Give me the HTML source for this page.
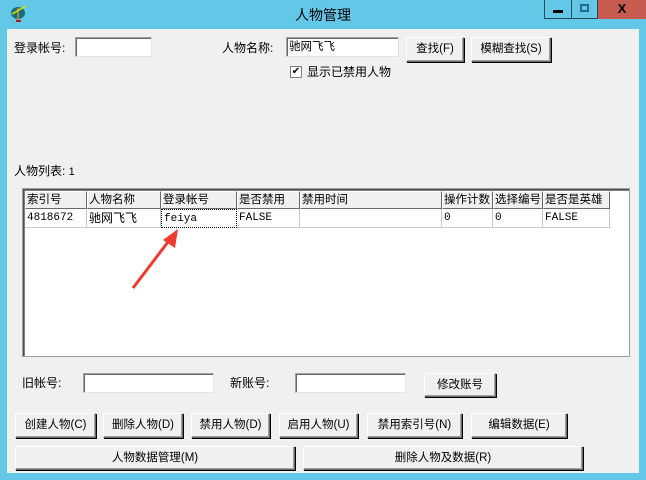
<!DOCTYPE html>
<html><head><meta charset="utf-8"><style>
*{box-sizing:border-box;margin:0;padding:0}
body{width:646px;height:480px;background:#63c8e8;position:relative;overflow:hidden;font-family:"Liberation Sans","Noto Sans CJK SC","WenQuanYi Zen Hei",sans-serif;font-size:12px;color:#000}
.a{position:absolute}
.client{left:7px;top:29px;width:632px;height:444px;background:#f0f0f0}
.inp{position:absolute;background:#fff;border:1px solid #a0a0a0;border-right-color:#e3e3e3;border-bottom-color:#e3e3e3;box-shadow:inset 1px 1px 0 #696969;font-size:11.5px;line-height:18px;padding-left:2px}
.btn{position:absolute;background:#f0f0f0;border:1px solid #fff;border-right-color:#696969;border-bottom-color:#696969;box-shadow:1px 1px 0 #000 , inset -1px -1px 0 #a0a0a0;text-align:center;font-size:11.5px}
.lbl{position:absolute;font-size:12px;line-height:14px;white-space:nowrap}
.list{left:22px;top:188px;width:608px;height:169px;background:#fff;border:1px solid #a0a0a0;box-shadow:inset 1px 1px 0 #505050,inset 2px 2px 0 #808080}
.hd{position:absolute;top:191px;height:18px;background:#f0f0f0;border-right:1px solid #696969;border-bottom:1px solid #696969;border-left:1px solid #fff;border-top:1px solid #fff;padding-left:1px;line-height:16px;white-space:nowrap;overflow:hidden;font-size:11.5px}
.cell{position:absolute;top:209px;height:19px;border-right:1px solid #c8c8c8;border-bottom:1px solid #c8c8c8;padding-left:2px;line-height:18px;font-family:"Liberation Mono","Noto Sans CJK SC",monospace;font-size:11px;white-space:nowrap}
</style></head><body>
<svg class="a" style="left:8px;top:4px" width="20" height="18" viewBox="0 0 20 18"><ellipse cx="10" cy="9" rx="7" ry="6" fill="#16707a"/><rect x="9" y="4" width="2" height="13" fill="#b08040"/><path d="M4 10 L18 2" stroke="#e0e000" stroke-width="1.5"/><rect x="8" y="16" width="5" height="2" fill="#a02020"/></svg>
<div class="a" style="left:0;top:5px;width:646px;text-align:center;font-size:14px">人物管理</div>
<div class="a" style="left:544px;top:0;width:28px;height:19px;border:1px solid #2a4a5a;border-top:none"></div>
<div class="a" style="left:553px;top:10px;width:10px;height:3px;background:#000"></div>
<div class="a" style="left:572px;top:0;width:26px;height:19px;border:1px solid #2a4a5a;border-top:none;border-left:none"></div>
<div class="a" style="left:580px;top:4px;width:9px;height:8px;border:2px solid #1e6a8a"></div>
<div class="a" style="left:598px;top:0;width:48px;height:19px;background:#c75b50;text-align:center;font-weight:bold;font-size:13px;line-height:18px">X</div>
<div class="a client"></div>
<div class="lbl" style="left:14px;top:41px">登录帐号:</div>
<div class="inp" style="left:75px;top:37px;width:77px;height:20px"></div>
<div class="lbl" style="left:222px;top:41px">人物名称:</div>
<div class="inp" style="left:286px;top:37px;width:113px;height:20px">驰网飞飞</div>
<div class="btn" style="left:406px;top:37px;width:58px;height:25px;line-height:23px">查找(F)</div>
<div class="btn" style="left:471px;top:37px;width:80px;height:25px;line-height:23px">模糊查找(S)</div>
<div class="a" style="left:290px;top:66px;width:12px;height:12px;background:#fff;border:1px solid #808080;font-size:10px;line-height:10px;text-align:center">✔</div>
<div class="lbl" style="left:307px;top:65px">显示已禁用人物</div>
<div class="lbl" style="left:14px;top:164px">人物列表: <span style="font-size:11px">1</span></div>
<div class="a list"></div>
<div class="hd" style="left:25px;width:62px">索引号</div>
<div class="hd" style="left:87px;width:74px">人物名称</div>
<div class="hd" style="left:161px;width:76px">登录帐号</div>
<div class="hd" style="left:237px;width:63px">是否禁用</div>
<div class="hd" style="left:300px;width:142px">禁用时间</div>
<div class="hd" style="left:442px;width:51px">操作计数</div>
<div class="hd" style="left:493px;width:50px">选择编号</div>
<div class="hd" style="left:543px;width:67px">是否是英雄</div>
<div class="cell" style="left:25px;width:62px">4818672</div>
<div class="cell" style="left:87px;width:74px;font-family:'Noto Sans CJK SC',sans-serif;font-size:12px">驰网飞飞</div>
<div class="cell" style="left:161px;width:76px;border:1px dotted #000">feiya</div>
<div class="cell" style="left:237px;width:63px">FALSE</div>
<div class="cell" style="left:300px;width:142px"></div>
<div class="cell" style="left:442px;width:51px">0</div>
<div class="cell" style="left:493px;width:50px">0</div>
<div class="cell" style="left:543px;width:67px">FALSE</div>
<svg class="a" style="left:125px;top:222px" width="60" height="70"><path d="M8 66 L46 16" stroke="#f03a30" stroke-width="3"/><path d="M53 7 L38 18 L50 26 Z" fill="#f03a30"/></svg>
<div class="lbl" style="left:22px;top:376px">旧帐号:</div>
<div class="inp" style="left:83px;top:373px;width:131px;height:20px"></div>
<div class="lbl" style="left:230px;top:376px">新账号:</div>
<div class="inp" style="left:295px;top:373px;width:111px;height:20px"></div>
<div class="btn" style="left:424px;top:373px;width:72px;height:24px;line-height:22px">修改账号</div>
<div class="btn" style="left:15px;top:413px;width:81px;height:25px;line-height:23px">创建人物(C)</div>
<div class="btn" style="left:103px;top:413px;width:80px;height:25px;line-height:23px">删除人物(D)</div>
<div class="btn" style="left:191px;top:413px;width:79px;height:25px;line-height:23px">禁用人物(D)</div>
<div class="btn" style="left:279px;top:413px;width:79px;height:25px;line-height:23px">启用人物(U)</div>
<div class="btn" style="left:367px;top:413px;width:95px;height:25px;line-height:23px">禁用索引号(N)</div>
<div class="btn" style="left:471px;top:413px;width:96px;height:25px;line-height:23px">编辑数据(E)</div>
<div class="btn" style="left:15px;top:446px;width:280px;height:24px;line-height:22px">人物数据管理(M)</div>
<div class="btn" style="left:303px;top:446px;width:280px;height:24px;line-height:22px">删除人物及数据(R)</div>
</body></html>
